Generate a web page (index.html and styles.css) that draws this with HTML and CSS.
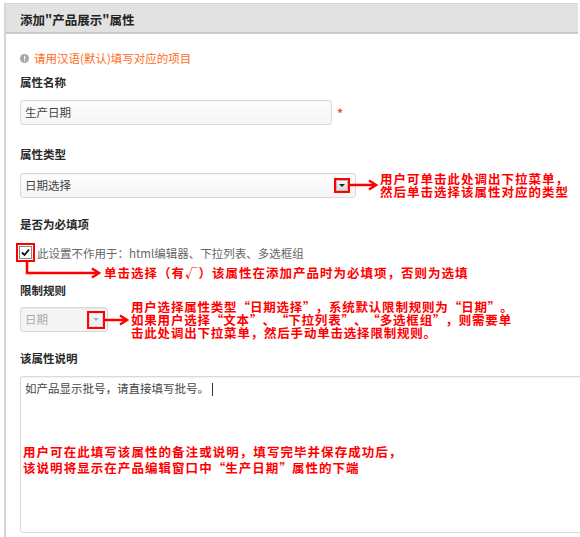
FILE: index.html
```html
<!DOCTYPE html>
<html lang="zh-CN">
<head>
    <meta charset="UTF-8">
    <meta name="viewport" content="width=device-width, initial-scale=1.0">
    <title>添加属性</title>
    <link rel="stylesheet" href="styles.css">
</head>
<body>
    <div class="panel">
        <div class="panel-head">添加"产品展示"属性</div>

        <div class="panel-body">
            <p class="tip">
                <svg class="tip-icon" width="9" height="9" viewBox="0 0 9 9">
                    <circle cx="4.5" cy="4.5" r="4.5" fill="#a8a8a8"/>
                    <rect x="4" y="1.8" width="1.2" height="3.6" fill="#fff"/>
                    <rect x="4" y="6.2" width="1.2" height="1.2" fill="#fff"/>
                </svg>
                请用汉语(默认)填写对应的项目
            </p>

            <!-- 属性名称 -->
            <div class="label label-name">属性名称</div>
            <div class="field-row name-row">
                <div class="input name-input">生产日期</div>
                <span class="required">*</span>
            </div>

            <!-- 属性类型 -->
            <div class="label label-type">属性类型</div>
            <div class="field-row type-row">
                <div class="select type-select">
                    <span>日期选择</span>
                    <span class="drop-btn"></span>
                </div>
                <svg class="arrow type-arrow" width="30" height="12" viewBox="0 0 30 12">
                    <path d="M0 6H26" stroke="#f00" stroke-width="2.5"/>
                    <path d="M20 1.5L27 6L20 10.5" fill="none" stroke="#f00" stroke-width="2.5"/>
                </svg>
                <div class="note">用户可单击此处调出下拉菜单，<br>然后单击选择该属性对应的类型</div>
            </div>

            <!-- 是否为必填项 -->
            <div class="label label-required">是否为必填项</div>
            <div class="check-row">
                <span class="check-mark">
                    <span class="check-box">
                        <svg width="9" height="9" viewBox="0 0 9 9">
                            <path d="M1 4.5L3.5 7L8 1.5" fill="none" stroke="#111" stroke-width="1.8"/>
                        </svg>
                    </span>
                </span>
                <span class="check-text">此设置不作用于：html编辑器、下拉列表、多选框组</span>
            </div>
            <div class="note-row">
                <svg class="arrow" width="80" height="17" viewBox="0 0 80 17">
                    <path d="M3 0V11H74" fill="none" stroke="#f00" stroke-width="2.5"/>
                    <path d="M68 6.5L75 11L68 15.5" fill="none" stroke="#f00" stroke-width="2.5"/>
                </svg>
                <div class="note note-check">单击选择（有√）该属性在添加产品时为必填项，否则为选填</div>
            </div>

            <!-- 限制规则 -->
            <div class="label label-rule">限制规则</div>
            <div class="field-row rule-row">
                <div class="select rule-select">
                    <span>日期</span>
                    <span class="drop-btn"></span>
                </div>
                <svg class="arrow rule-arrow" width="25" height="12" viewBox="0 0 25 12">
                    <path d="M0 6H21" stroke="#f00" stroke-width="2.5"/>
                    <path d="M15 1.5L22 6L15 10.5" fill="none" stroke="#f00" stroke-width="2.5"/>
                </svg>
                <div class="note note-rule">用户选择属性类型<span class="qo">“</span>日期选择<span class="qc">”</span>，系统默认限制规则为<span class="qo">“</span>日期<span class="qc">”</span>。<br>如果用户选择<span class="qo">“</span>文本<span class="qc">”</span>、<span class="qo">“</span>下拉列表<span class="qc">”</span>、<span class="qo">“</span>多选框组<span class="qc">”</span>，则需要单<br>击此处调出下拉菜单，然后手动单击选择限制规则。</div>
            </div>

            <!-- 该属性说明 -->
            <div class="label label-desc">该属性说明</div>
            <div class="textarea">
                <p class="textarea-text">如产品显示批号，请直接填写批号。<span class="caret"></span></p>
                <div class="note note-desc">用户可在此填写该属性的备注或说明，填写完毕并保存成功后，<br>该说明将显示在产品编辑窗口中<span class="qo">“</span>生产日期<span class="qc">”</span>属性的下端</div>
            </div>
        </div>
    </div>
</body>
</html>
```

FILE: styles.css
```css
/* page */
body {
    margin: 0;
    font-family: "Noto Sans CJK SC", "Liberation Sans", sans-serif;
    font-size: 11.5px;
    color: #333;
    background-color: #fff;
    overflow: hidden;
}

.panel {
    margin: 3px 0 0 4px;
    width: 572px;
    height: 534px;
    border-top: 1px solid #d6d6d6;
    border-left: 2px solid #d6d6d6;
}

.panel-head {
    height: 25px;
    padding: 3px 0 0 14px;
    line-height: 25px;
    font-size: 12.5px;
    font-weight: bold;
    color: #222;
    background-color: #e2e2e2;
    border-bottom: 2px solid #cacaca;
}

.panel-body {
    padding-left: 14px;
}

.tip {
    display: flex;
    align-items: center;
    margin: 16px 0 0;
    line-height: 16px;
    color: #ff6a1a;
}

.tip-icon {
    margin-right: 5px;
}

/* labels */
.label {
    font-weight: bold;
    line-height: 16px;
    color: #2a2a2a;
}

.label-name { margin-top: 8px; }
.label-type { margin-top: 21px; }
.label-required { margin-top: 18px; }
.label-rule { margin-top: 1px; }
.label-desc { margin-top: 11px; }

/* form controls */
.field-row {
    display: flex;
    align-items: center;
}

.name-row,
.type-row {
    margin-top: 10px;
}

.rule-row {
    margin-top: 2px;
}

.input,
.select {
    box-sizing: border-box;
    height: 25px;
    border: 1px solid #d9d9d9;
    border-radius: 3px;
    background: linear-gradient(#fdfdfd, #f5f5f5);
    box-shadow: inset 0 1px 1px rgba(0, 0, 0, 0.04);
    padding-left: 4px;
    line-height: 23px;
    color: #444;
}

.name-input {
    width: 312px;
}

.required {
    margin-left: 5px;
    color: #f44;
    font-size: 12px;
    font-weight: bold;
    line-height: 12px;
}

.select {
    display: flex;
    align-items: center;
    justify-content: space-between;
}

.type-select {
    width: 336px;
    padding-right: 7px;
}

.rule-select {
    width: 88px;
    padding-right: 4px;
    color: #aaa;
    background: #f4f4f4;
}

.drop-btn {
    display: flex;
    align-items: center;
    justify-content: center;
    box-sizing: border-box;
    width: 12px;
    height: 11px;
    border: 1px solid #b8b8b8;
    background: linear-gradient(#f6f6f6, #d8d8d8);
    outline: 2px solid #f00;
}

.drop-btn::after {
    content: "";
    border-left: 3px solid transparent;
    border-right: 3px solid transparent;
    border-top: 3px solid #222;
}

.rule-select .drop-btn {
    width: 14px;
    height: 14px;
    border-color: #ddd;
    background: linear-gradient(#fafafa, #ececec);
}

.rule-select .drop-btn::after {
    border-top-color: #aaa;
}

/* annotations */
.arrow {
    flex-shrink: 0;
}

.type-arrow {
    margin-left: -7px;
}

.rule-arrow {
    margin-left: -3px;
}

.note {
    margin-left: 1px;
    color: #f00;
    font-size: 12.5px;
    font-weight: bold;
    letter-spacing: 1px;
    line-height: 13px;
    white-space: nowrap;
}

/* full-width quotes like the old song-style font */
.qo,
.qc {
    display: inline-block;
    width: 1em;
}

.qo {
    text-align: right;
}

.qc {
    text-align: left;
}

.note-rule {
    letter-spacing: 0.8px;
}

/* checkbox */
.check-row {
    display: flex;
    align-items: center;
    margin: 11px 0 0 -4px;
}

.check-mark {
    display: flex;
    align-items: center;
    justify-content: center;
    width: 15px;
    height: 15px;
    border: 2px solid #f00;
}

.check-box {
    display: flex;
    align-items: center;
    justify-content: center;
    width: 11px;
    height: 11px;
    border: 1px solid #888;
    background-color: #fff;
}

.check-text {
    margin-left: 2px;
    color: #666;
}

.note-row {
    display: flex;
    align-items: flex-start;
}

.note-row .arrow {
    margin-left: 4px;
}

.note-check {
    margin: 3px 0 0 0;
    line-height: 16px;
}

/* description */
.textarea {
    box-sizing: border-box;
    width: 620px;
    height: 157px;
    margin-top: 10px;
    padding: 3px 4px;
    border: 1px solid #d9d9d9;
    border-radius: 3px;
    background-color: #fff;
    box-shadow: inset 0 1px 2px rgba(0, 0, 0, 0.06);
}

.textarea-text {
    margin: 0;
    line-height: 16px;
    color: #444;
}

.caret {
    display: inline-block;
    width: 1px;
    height: 13px;
    margin-left: 3px;
    vertical-align: middle;
    background-color: #333;
}

.note-desc {
    margin: 48px 0 0 -2px;
    line-height: 16px;
    letter-spacing: 1.05px;
}
```
